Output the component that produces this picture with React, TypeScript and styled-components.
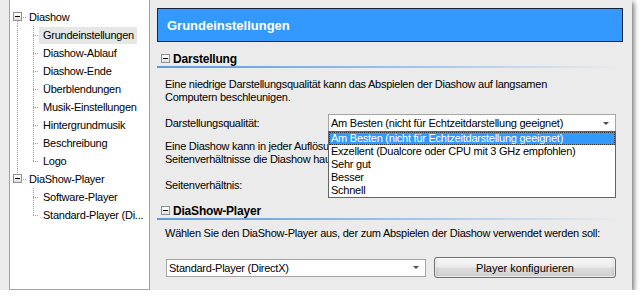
import React from 'react';
import styled, { createGlobalStyle } from 'styled-components';

const TREE = [
  {
    label: 'Diashow',
    children: [
      'Grundeinstellungen',
      'Diashow-Ablauf',
      'Diashow-Ende',
      'Überblendungen',
      'Musik-Einstellungen',
      'Hintergrundmusik',
      'Beschreibung',
      'Logo',
    ],
  },
  { label: 'DiaShow-Player', children: ['Software-Player', 'Standard-Player (Di...'] },
];

const QUALITIES = [
  'Am Besten (nicht für Echtzeitdarstellung geeignet)',
  'Exzellent (Dualcore oder CPU mit 3 GHz empfohlen)',
  'Sehr gut',
  'Besser',
  'Schnell',
];

const GlobalStyle = createGlobalStyle`
  html, body { margin: 0; padding: 0; background: #fff; }
  body {
    font-family: 'Liberation Sans', Arial, sans-serif;
    font-size: 11px;
    letter-spacing: -0.25px;
    color: #000;
  }
`;

const DOTS_V = 'repeating-linear-gradient(to bottom, #a0a0a0 0 1px, transparent 1px 2px)';
const DOTS_H = 'repeating-linear-gradient(to right, #a0a0a0 0 1px, transparent 1px 2px)';

const Window = styled.div`
  display: flex;
  width: 632px;
  height: 290px;
  padding-left: 9px;
  box-sizing: border-box;
  background: #ebebeb;
  box-shadow: 2px 2px 5px rgba(0, 0, 0, 0.55);
`;

/// TREE
/** ******************************************************************* */
const TreePanel = styled.ul`
  list-style: none;
  margin: -1px 0 0;
  padding: 8px 0 0;
  width: 141px;
  height: 291px;
  flex: none;
  box-sizing: border-box;
  background: #fff;
  border: 1px solid #a3a3a3;
  overflow: hidden;
`;

const TreeRow = styled.li`
  display: flex;
  align-items: center;
  height: 18px;
`;

const Guide = styled.span<{ $w: number; $up?: boolean; $down?: boolean; $branch?: boolean }>`
  position: relative;
  flex: none;
  width: ${(p) => p.$w}px;
  height: 18px;
  &::before {
    content: '';
    display: ${(p) => (p.$up || p.$down ? 'block' : 'none')};
    position: absolute;
    left: 7px;
    width: 1px;
    top: ${(p) => (p.$up ? '0' : '9px')};
    bottom: ${(p) => (p.$down ? '0' : '9px')};
    background: ${DOTS_V};
  }
  &::after {
    content: '';
    display: ${(p) => (p.$branch ? 'block' : 'none')};
    position: absolute;
    left: 7px;
    right: 0;
    top: 9px;
    height: 1px;
    background: ${DOTS_H};
  }
`;

const MinusBox = styled.span<{ $inTree?: boolean }>`
  position: ${(p) => (p.$inTree ? 'absolute' : 'relative')};
  left: ${(p) => (p.$inTree ? '3px' : 'auto')};
  top: ${(p) => (p.$inTree ? '4px' : 'auto')};
  z-index: 1;
  flex: none;
  width: 9px;
  height: 9px;
  box-sizing: border-box;
  border: 1px solid #919191;
  background: linear-gradient(to bottom, #ffffff, #dedede);
  &::after {
    content: '';
    position: absolute;
    left: 1px;
    top: 3px;
    width: 5px;
    height: 1px;
    background: #000;
  }
`;

const NodeLabel = styled.span<{ $child?: boolean; $selected?: boolean }>`
  height: 17px;
  line-height: 17px;
  padding: 0 3px 0 ${(p) => (p.$child ? 4 : 3)}px;
  white-space: nowrap;
  background: ${(p) => (p.$selected ? '#e6e6e6' : 'transparent')};
`;

function Tree() {
  return (
    <TreePanel>
      {TREE.map((node, r) => {
        const lastRoot = r === TREE.length - 1;
        return (
          <React.Fragment key={node.label}>
            <TreeRow>
              <Guide $w={16} $up={r > 0} $down={!lastRoot} $branch>
                <MinusBox $inTree />
              </Guide>
              <NodeLabel>{node.label}</NodeLabel>
            </TreeRow>
            {node.children.map((child, i) => (
              <TreeRow key={child}>
                <Guide $w={16} $up={!lastRoot} $down={!lastRoot} />
                <Guide $w={13} $up $down={i < node.children.length - 1} $branch />
                <NodeLabel $child $selected={child === 'Grundeinstellungen'}>
                  {child}
                </NodeLabel>
              </TreeRow>
            ))}
          </React.Fragment>
        );
      })}
    </TreePanel>
  );
}

/// SETTINGS PAGE
/** ******************************************************************* */
const Content = styled.section`
  flex: 1;
  min-width: 0;
  display: flex;
  flex-direction: column;
  padding: 8px 9px 0 7px;
`;

const TitleBar = styled.h1`
  margin: 0;
  height: 34px;
  box-sizing: border-box;
  display: flex;
  align-items: center;
  padding-left: 9px;
  border: 1px solid #16233a;
  background: #3399ff;
  color: #fff;
  font-size: 13px;
  font-weight: bold;
  letter-spacing: 0;
`;

const SectionHead = styled.h2`
  margin: 9px 0 0;
  height: 17px;
  box-sizing: border-box;
  padding: 0 0 2px 4px;
  display: flex;
  align-items: center;
  gap: 3px;
  font-size: 12px;
  font-weight: bold;
  letter-spacing: -0.2px;
  background: linear-gradient(to right, #5b9ae0, #9fc4ee 55%, rgba(236, 236, 236, 0)) left bottom / 100%
    2px no-repeat;
`;

const Text = styled.p<{ $top?: number }>`
  margin: ${(p) => p.$top ?? 7}px 0 0;
  padding-left: 8px;
  line-height: 13px;
  white-space: nowrap;
`;

const FieldRow = styled.div`
  display: flex;
  align-items: center;
  margin-top: 10px;
  padding-left: 8px;
  height: 18px;
`;

const FieldLabel = styled.span`
  width: 163px;
  flex: none;
`;

const Combo = styled.div<{ $w: number }>`
  position: relative;
  display: flex;
  align-items: center;
  width: ${(p) => p.$w}px;
  height: 18px;
  box-sizing: border-box;
  padding-left: 2px;
  border: 1px solid #a5a5a5;
  background: #fff;
  white-space: nowrap;
`;

const Arrow = styled.span`
  margin-left: auto;
  margin-right: 6px;
  width: 0;
  height: 0;
  border-left: 3px solid transparent;
  border-right: 3px solid transparent;
  border-top: 3px solid #4a4a4a;
`;

const DropList = styled.ul`
  position: absolute;
  top: 100%;
  left: -1px;
  right: -1px;
  z-index: 5;
  margin: 0;
  padding: 0;
  list-style: none;
  border: 1px solid #646464;
  background: #fff;
`;

const DropItem = styled.li<{ $active?: boolean }>`
  height: 13px;
  line-height: 13px;
  padding-left: 2px;
  white-space: nowrap;
  background: ${(p) => (p.$active ? '#3399ff' : 'transparent')};
  color: ${(p) => (p.$active ? '#fff' : '#000')};
  outline: ${(p) => (p.$active ? '1px dotted #333' : 'none')};
  outline-offset: -1px;
`;

const ButtonRow = styled.div`
  display: flex;
  align-items: center;
  gap: 8px;
  margin-top: 17px;
  padding-left: 9px;
`;

const Button = styled.button`
  width: 182px;
  height: 21px;
  padding: 0;
  border: 1px solid #707070;
  border-radius: 3px;
  background: linear-gradient(to bottom, #f6f6f6 0%, #ececec 45%, #dcdcdc 55%, #cdcdcd 100%);
  box-shadow: inset 0 0 0 1px rgba(255, 255, 255, 0.6), inset 3px 0 3px -2px rgba(0, 0, 0, 0.15),
    inset -3px 0 3px -2px rgba(0, 0, 0, 0.15);
  font: inherit;
  font-size: 11px;
  color: #000;
`;

export default function App() {
  return (
    <>
      <GlobalStyle />
      <Window>
        <Tree />
        <Content>
          <TitleBar>Grundeinstellungen</TitleBar>

          <SectionHead>
            <MinusBox />
            Darstellung
          </SectionHead>
          <Text $top={10}>
            Eine niedrige Darstellungsqualität kann das Abspielen der Diashow auf langsamen
            <br />
            Computern beschleunigen.
          </Text>
          <FieldRow>
            <FieldLabel>Darstellungsqualität:</FieldLabel>
            <Combo $w={288}>
              {QUALITIES[0]}
              <Arrow />
              <DropList>
                {QUALITIES.map((q, i) => (
                  <DropItem key={q} $active={i === 0}>
                    {q}
                  </DropItem>
                ))}
              </DropList>
            </Combo>
          </FieldRow>
          <Text $top={8}>
            Eine Diashow kann in jeder Auflösung abgespielt werden. Geben Sie an, für
            <br />
            Seitenverhältnisse die Diashow hauptsächlich optimiert werden soll.
          </Text>
          <FieldRow>
            <FieldLabel>Seitenverhältnis:</FieldLabel>
            <Combo $w={288}>
              <Arrow />
            </Combo>
          </FieldRow>

          <SectionHead>
            <MinusBox />
            DiaShow-Player
          </SectionHead>
          <Text $top={7}>
            Wählen Sie den DiaShow-Player aus, der zum Abspielen der Diashow verwendet werden soll:
          </Text>
          <ButtonRow>
            <Combo $w={260}>
              Standard-Player (DirectX)
              <Arrow />
            </Combo>
            <Button>Player konfigurieren</Button>
          </ButtonRow>
        </Content>
      </Window>
    </>
  );
}
